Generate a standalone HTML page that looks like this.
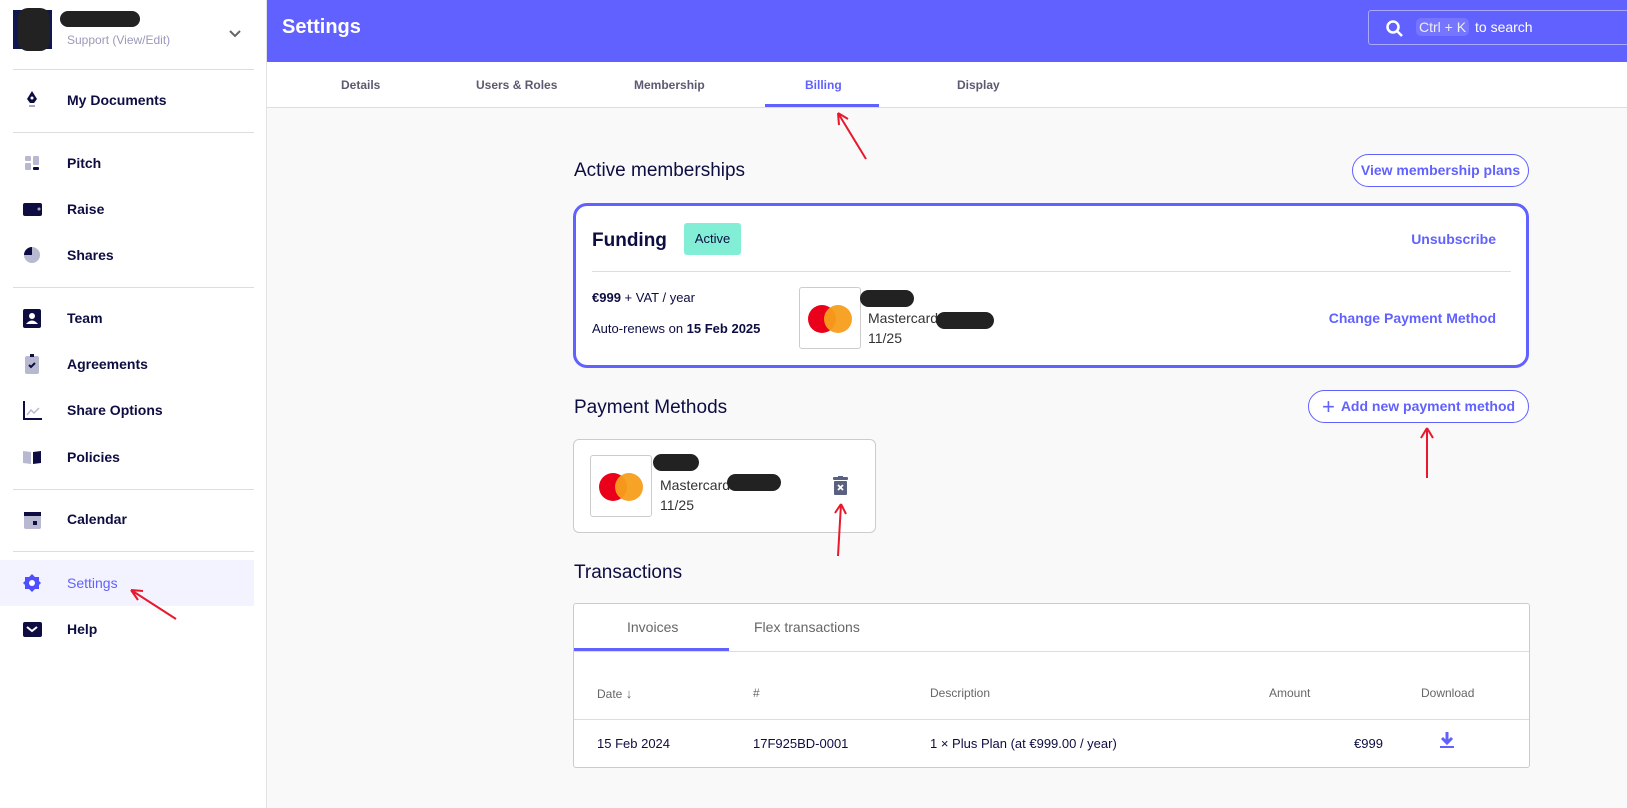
<!DOCTYPE html>
<html><head><meta charset="utf-8"><style>
*{box-sizing:border-box;margin:0;padding:0}
body{width:1627px;height:808px;overflow:hidden;font-family:"Liberation Sans",sans-serif;color:#0d0d42;background:#f9f9f9;position:relative}
.sb{position:absolute;left:0;top:0;width:267px;height:808px;background:#fff;border-right:1px solid #e2e2e2}
.hr{position:absolute;left:13px;width:241px;height:1px;background:#ddd}
.it{position:absolute;left:0;width:254px;height:46px;display:flex;align-items:center;font-size:14px;font-weight:bold;color:#0d0d42}
.it .ic{position:absolute;left:22px;top:13px;width:20px;height:20px}
.it span{position:absolute;left:67px}
.hd{position:absolute;left:267px;top:0;right:0;height:62px;background:#6161ff}
.tabs{position:absolute;left:267px;top:62px;right:0;height:46px;background:#fff;border-bottom:1px solid #ddd}
.tab{position:absolute;top:16px;font-size:12px;font-weight:bold;color:#5a5a70}
.h2{position:absolute;font-size:19px;color:#0d0d42}
.btn{position:absolute;border:1px solid #6161ff;border-radius:18px;color:#6161ff;font-size:14px;font-weight:bold;text-align:center;background:#fff}
.mc{position:absolute;width:62px;height:62px;border:1px solid #ccc;border-radius:3px;background:#fff}
.mc i{position:absolute;top:17px;width:28px;height:28px;border-radius:50%}
.blob{position:absolute;background:#222;border-radius:12px}
.th{position:absolute;top:686px;font-size:12px;color:#666}
.td{position:absolute;top:736px;font-size:13px;color:#0d0d42}
</style></head><body>
<div class="sb">
 <div style="position:absolute;left:13px;top:10px;width:39px;height:39px;background:#0f1650"></div>
 <div style="position:absolute;left:18px;top:8px;width:32px;height:43px;background:#222;border-radius:10px"></div>
 <div class="blob" style="left:60px;top:11px;width:80px;height:16px"></div>
 <div style="position:absolute;left:67px;top:33px;font-size:12px;color:#9a9ab8">Support (View/Edit)</div>
 <svg style="position:absolute;left:228px;top:29px" width="14" height="10"><path d="M2 2l5 5 5-5" stroke="#666" stroke-width="2" fill="none"/></svg>
 <div class="hr" style="top:69px"></div>
 <div class="it" style="top:77px"><svg class="ic" viewBox="0 0 20 20"><path d="M10 1l5 8-3 4H8L5 9z" fill="#0d0d42"/><circle cx="10" cy="8" r="1.5" fill="#fff"/><rect x="7" y="15" width="6" height="2" fill="#aab"/></svg><span>My Documents</span></div>
 <div class="hr" style="top:132px"></div>
 <div class="it" style="top:140px"><svg class="ic" viewBox="0 0 20 20"><rect x="3" y="3" width="6" height="5" rx="1" fill="#b8b8d0"/><rect x="3" y="10" width="6" height="7" rx="1" fill="#b8b8d0"/><rect x="11" y="3" width="6" height="9" rx="1" fill="#b8b8d0"/><rect x="11" y="14" width="6" height="3" rx="1" fill="#0d0d42"/></svg><span>Pitch</span></div>
 <div class="it" style="top:186px"><svg class="ic" viewBox="0 0 20 20"><rect x="1" y="4" width="19" height="13" rx="2" fill="#0d0d42"/><circle cx="17" cy="10" r="1.5" fill="#aab"/></svg><span>Raise</span></div>
 <div class="it" style="top:232px"><svg class="ic" viewBox="0 0 20 20"><circle cx="10" cy="10" r="8" fill="#b8b8d0"/><path d="M10 10V2A8 8 0 0 0 2 10z" fill="#0d0d42"/></svg><span>Shares</span></div>
 <div class="hr" style="top:287px"></div>
 <div class="it" style="top:295px"><svg class="ic" viewBox="0 0 20 20"><rect x="1" y="1" width="18" height="19" rx="2" fill="#0d0d42"/><circle cx="10" cy="8" r="3" fill="#fff"/><path d="M4 16q6-7 12 0z" fill="#fff"/></svg><span>Team</span></div>
 <div class="it" style="top:341px"><svg class="ic" viewBox="0 0 20 20"><rect x="3" y="2" width="14" height="18" rx="2" fill="#b8b8d0"/><rect x="8" y="0" width="4" height="3" fill="#0d0d42"/><path d="M7 11l2 2 4-4" stroke="#0d0d42" stroke-width="2" fill="none"/></svg><span>Agreements</span></div>
 <div class="it" style="top:387px"><svg class="ic" viewBox="0 0 20 20"><path d="M2 1v18h18" stroke="#0d0d42" stroke-width="2" fill="none"/><path d="M5 15l4-5 3 3 5-5" stroke="#b8b8d0" stroke-width="1.5" fill="none"/></svg><span>Share Options</span></div>
 <div class="it" style="top:434px"><svg class="ic" viewBox="0 0 20 20"><path d="M1 4l8 1v12l-8-1z" fill="#b8b8d0"/><path d="M11 5l8-1v12l-8 1z" fill="#0d0d42"/></svg><span>Policies</span></div>
 <div class="hr" style="top:489px"></div>
 <div class="it" style="top:496px"><svg class="ic" viewBox="0 0 20 20"><rect x="2" y="3" width="17" height="17" rx="2" fill="#b8b8d0"/><rect x="2" y="3" width="17" height="4" fill="#0d0d42"/><rect x="11" y="12" width="4" height="4" fill="#0d0d42"/></svg><span>Calendar</span></div>
 <div class="hr" style="top:551px"></div>
 <div class="it" style="top:560px;background:#f3f3ff;color:#6161ff"><svg class="ic" viewBox="0 0 20 20"><path d="M10 1l3 3h4v4l2 2-2 2v4h-4l-3 3-3-3H3v-4l-2-2 2-2V4h4z" fill="#4f4fff"/><circle cx="10" cy="10" r="3" fill="#fff"/></svg><span style="font-weight:normal">Settings</span></div>
 <div class="it" style="top:606px"><svg class="ic" viewBox="0 0 20 20"><rect x="1" y="3" width="19" height="15" rx="2" fill="#0d0d42"/><path d="M5 8l5 4 5-4" stroke="#fff" stroke-width="2" fill="none"/></svg><span>Help</span></div>
</div>
<div class="hd">
 <div style="position:absolute;left:15px;top:16px;font-size:20px;font-weight:bold;color:#fff">Settings</div>
 <div style="position:absolute;left:1101px;top:10px;width:270px;height:35px;border:1px solid #a9a9ff;border-radius:3px">
  <svg style="position:absolute;left:16px;top:8px" width="20" height="20"><circle cx="8" cy="8" r="5.5" stroke="#fff" stroke-width="2.5" fill="none"/><path d="M12 12l5 5" stroke="#fff" stroke-width="2.5"/></svg>
  <span style="position:absolute;left:47px;top:7px;background:#7575ff;border-radius:5px;padding:1px 3px;color:#eee;font-size:14px">Ctrl + K</span>
  <span style="position:absolute;left:106px;top:8px;color:#fff;font-size:14px">to search</span>
 </div>
</div>
<div class="tabs">
 <div class="tab" style="left:74px">Details</div>
 <div class="tab" style="left:209px">Users &amp; Roles</div>
 <div class="tab" style="left:367px">Membership</div>
 <div class="tab" style="left:538px;color:#6161ff">Billing</div>
 <div style="position:absolute;left:498px;top:42px;width:114px;height:3px;background:#6161ff"></div>
 <div class="tab" style="left:690px">Display</div>
</div>
<div class="h2" style="left:574px;top:160px">Active memberships</div>
<div class="btn" style="left:1352px;top:154px;width:177px;height:33px;line-height:31px">View membership plans</div>
<div style="position:absolute;left:573px;top:203px;width:956px;height:165px;border:3px solid #6161ff;border-radius:14px;background:#fff">
 <div style="position:absolute;left:16px;top:24px;font-size:19px;font-weight:bold">Funding</div>
 <div style="position:absolute;left:108px;top:17px;width:57px;height:32px;background:#82eed5;border-radius:3px;font-size:13px;text-align:center;line-height:32px">Active</div>
 <div style="position:absolute;right:30px;top:25px;font-size:14px;font-weight:bold;color:#6161ff">Unsubscribe</div>
 <div style="position:absolute;left:16px;right:15px;top:65px;height:1px;background:#ddd"></div>
 <div style="position:absolute;left:16px;top:84px;font-size:13px"><b>€999</b> + VAT / year</div>
 <div style="position:absolute;left:16px;top:115px;font-size:13px">Auto-renews on <b>15 Feb 2025</b></div>
 <div class="mc" style="left:223px;top:81px"><i style="left:8px;background:#eb001b"></i><i style="left:24px;background:#f79e1b;opacity:.95"></i></div>
 <div class="blob" style="left:284px;top:84px;width:54px;height:17px"></div>
 <div style="position:absolute;left:292px;top:104px;font-size:14px;color:#333">Mastercard</div>
 <div class="blob" style="left:360px;top:106px;width:58px;height:17px"></div>
 <div style="position:absolute;left:292px;top:124px;font-size:14px;color:#333">11/25</div>
 <div style="position:absolute;right:30px;top:104px;font-size:14px;font-weight:bold;color:#6161ff">Change Payment Method</div>
</div>
<div class="h2" style="left:574px;top:397px">Payment Methods</div>
<div class="btn" style="left:1308px;top:390px;width:221px;height:33px;line-height:31px"><span style="font-size:22px;font-weight:normal;vertical-align:-3px;margin-right:6px">+</span>Add new payment method</div>
<div style="position:absolute;left:573px;top:439px;width:303px;height:94px;border:1px solid #ccc;border-radius:6px;background:#fff">
 <div class="mc" style="left:16px;top:15px"><i style="left:8px;background:#eb001b"></i><i style="left:24px;background:#f79e1b;opacity:.95"></i></div>
 <div class="blob" style="left:79px;top:14px;width:46px;height:17px"></div>
 <div style="position:absolute;left:86px;top:37px;font-size:14px;color:#333">Mastercard</div>
 <div class="blob" style="left:153px;top:34px;width:54px;height:17px"></div>
 <div style="position:absolute;left:86px;top:57px;font-size:14px;color:#333">11/25</div>
 <svg style="position:absolute;left:259px;top:36px" width="15" height="19" viewBox="0 0 15 19"><rect x="0" y="1" width="15" height="3" rx="1" fill="#5a6080"/><rect x="5" y="0" width="5" height="2" fill="#5a6080"/><rect x="1" y="5" width="13" height="14" rx="1" fill="#5a6080"/><path d="M5 9l5 5M10 9l-5 5" stroke="#fff" stroke-width="1.8"/></svg>
</div>
<div class="h2" style="left:574px;top:562px">Transactions</div>
<div style="position:absolute;left:573px;top:603px;width:957px;height:165px;border:1px solid #ccc;border-radius:3px;background:#fff">
 <div style="position:absolute;left:53px;top:15px;font-size:14px;color:#666">Invoices</div>
 <div style="position:absolute;left:180px;top:15px;font-size:14px;color:#666">Flex transactions</div>
 <div style="position:absolute;left:0;right:0;top:47px;height:1px;background:#ddd"></div>
 <div style="position:absolute;left:0;top:44px;width:155px;height:3px;background:#6161ff"></div>
 <div style="position:absolute;left:0;right:0;top:115px;height:1px;background:#ddd"></div>
</div>
<div class="th" style="left:597px">Date <span style="font-size:13px">&#8595;</span></div>
<div class="th" style="left:753px">#</div>
<div class="th" style="left:930px">Description</div>
<div class="th" style="left:1269px">Amount</div>
<div class="th" style="left:1421px">Download</div>
<div class="td" style="left:597px">15 Feb 2024</div>
<div class="td" style="left:753px">17F925BD-0001</div>
<div class="td" style="left:930px">1 × Plus Plan (at €999.00 / year)</div>
<div class="td" style="left:1354px">€999</div>
<svg style="position:absolute;left:1439px;top:731px" width="16" height="19"><path d="M8 1v10M3 7l5 5 5-5" stroke="#6161ff" stroke-width="3" fill="none"/><rect x="1" y="15" width="14" height="2" fill="#6161ff"/></svg>
<svg style="position:absolute;left:0;top:0" width="1627" height="808"><g stroke="#e8192c" stroke-width="2" fill="none">
<path d="M866 159L838 113M838 113l1 12M838 113l10 6"/>
<path d="M1427 478V428M1427 428l-6 10M1427 428l6 10"/>
<path d="M838 556l3-52M841 504l-6 9M841 504l5 10"/>
<path d="M176 619L131 590M131 590l7 10M131 590l12 1"/>
</g></svg>
</body></html>
